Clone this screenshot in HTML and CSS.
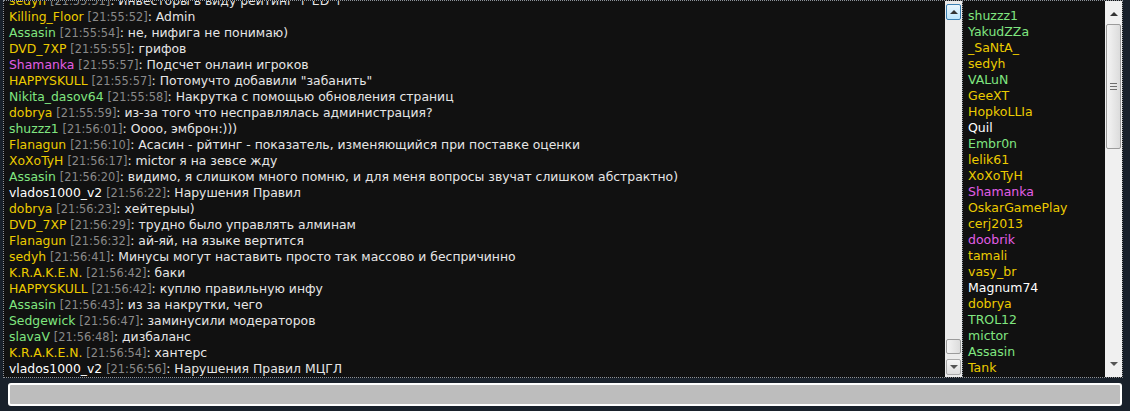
FILE: index.html
```html
<!DOCTYPE html>
<html>
	<head>
		<title>Чат</title>
		<meta http-equiv="Content-Type" content="text/html; charset=utf-8" />
		<link rel="stylesheet" href="styles.css">
	</head>
	<body>
		<div class="chat">
			<div class="messages">
				<div class="msg"><span class="nick yellow">sedyh</span> <span class="time">[21:55:51]</span>: Инвесторы в виду рейтинг + ED +</div>
				<div class="msg"><span class="nick yellow">Killing_Floor</span> <span class="time">[21:55:52]</span>: Admin</div>
				<div class="msg"><span class="nick green">Assasin</span> <span class="time">[21:55:54]</span>: не, нифига не понимаю)</div>
				<div class="msg"><span class="nick yellow">DVD_7XP</span> <span class="time">[21:55:55]</span>: грифов</div>
				<div class="msg"><span class="nick pink">Shamanka</span> <span class="time">[21:55:57]</span>: Подсчет онлаин игроков</div>
				<div class="msg"><span class="nick yellow">HAPPYSKULL</span> <span class="time">[21:55:57]</span>: Потомучто добавили "забанить"</div>
				<div class="msg"><span class="nick green">Nikita_dasov64</span> <span class="time">[21:55:58]</span>: Накрутка с помощью обновления страниц</div>
				<div class="msg"><span class="nick yellow">dobrya</span> <span class="time">[21:55:59]</span>: из-за того что несправлялась администрация?</div>
				<div class="msg"><span class="nick green">shuzzz1</span> <span class="time">[21:56:01]</span>: Оооо, эмброн:)))</div>
				<div class="msg"><span class="nick yellow">Flanagun</span> <span class="time">[21:56:10]</span>: Асасин - рйтинг - показатель, изменяющийся при поставке оценки</div>
				<div class="msg"><span class="nick yellow">XoXoTyH</span> <span class="time">[21:56:17]</span>: mictor я на зевсе жду</div>
				<div class="msg"><span class="nick green">Assasin</span> <span class="time">[21:56:20]</span>: видимо, я слишком много помню, и для меня вопросы звучат слишком абстрактно)</div>
				<div class="msg"><span class="nick white">vlados1000_v2</span> <span class="time">[21:56:22]</span>: Нарушения Правил</div>
				<div class="msg"><span class="nick yellow">dobrya</span> <span class="time">[21:56:23]</span>: хейтерыы)</div>
				<div class="msg"><span class="nick yellow">DVD_7XP</span> <span class="time">[21:56:29]</span>: трудно было управлять алминам</div>
				<div class="msg"><span class="nick yellow">Flanagun</span> <span class="time">[21:56:32]</span>: ай-яй, на языке вертится</div>
				<div class="msg"><span class="nick yellow">sedyh</span> <span class="time">[21:56:41]</span>: Минусы могут наставить просто так массово и беспричинно</div>
				<div class="msg"><span class="nick yellow">K.R.A.K.E.N.</span> <span class="time">[21:56:42]</span>: баки</div>
				<div class="msg"><span class="nick yellow">HAPPYSKULL</span> <span class="time">[21:56:42]</span>: куплю правильную инфу</div>
				<div class="msg"><span class="nick green">Assasin</span> <span class="time">[21:56:43]</span>: из за накрутки, чего</div>
				<div class="msg"><span class="nick green">Sedgewick</span> <span class="time">[21:56:47]</span>: заминусили модераторов</div>
				<div class="msg"><span class="nick green">slavaV</span> <span class="time">[21:56:48]</span>: дизбаланс</div>
				<div class="msg"><span class="nick yellow">K.R.A.K.E.N.</span> <span class="time">[21:56:54]</span>: хантерс</div>
				<div class="msg"><span class="nick white">vlados1000_v2</span> <span class="time">[21:56:56]</span>: Нарушения Правил МЦГЛ</div>
			</div>
			<div class="scrollbar">
				<div class="sbtn hover"><span class="arrow up"></span></div>
				<div class="track chat-track">
					<div class="thumb small"></div>
				</div>
				<div class="sbtn"><span class="arrow down"></span></div>
			</div>
			<div class="users">
				<div class="user green">shuzzz1</div>
				<div class="user green">YakudZZa</div>
				<div class="user yellow">_SaNtA_</div>
				<div class="user yellow">sedyh</div>
				<div class="user green">VALuN</div>
				<div class="user yellow">GeeXT</div>
				<div class="user yellow">HopkoLLIa</div>
				<div class="user white">Quil</div>
				<div class="user green">Embr0n</div>
				<div class="user yellow">lelik61</div>
				<div class="user yellow">XoXoTyH</div>
				<div class="user pink">Shamanka</div>
				<div class="user yellow">OskarGamePlay</div>
				<div class="user yellow">cerj2013</div>
				<div class="user pink">doobrik</div>
				<div class="user yellow">tamali</div>
				<div class="user yellow">vasy_br</div>
				<div class="user white">Magnum74</div>
				<div class="user yellow">dobrya</div>
				<div class="user green">TROL12</div>
				<div class="user green">mictor</div>
				<div class="user green">Assasin</div>
				<div class="user yellow">Tank</div>
			</div>
			<div class="scrollbar plain">
				<div class="sbtn flat"><span class="arrow up"></span></div>
				<div class="track">
					<div class="thumb big"><span class="grip"></span></div>
				</div>
				<div class="sbtn flat"><span class="arrow down"></span></div>
			</div>
		</div>
		<div class="input-row">
			<input class="say" type="text">
		</div>
	</body>
</html>
```

FILE: styles.css
```css
body {
	margin: 0px;
	padding: 0px;
	background: #19212b;
	font-family: "DejaVu Sans", Verdana, sans-serif;
	font-size: 12.4px;
	overflow: hidden;
}
.chat {
	display: flex;
	margin-left: 3px;
	width: 1118px;
	height: 376px;
	border: 1px dotted #8c929a;
	background: #111111;
}
.messages {
	flex: 1;
	display: flex;
	flex-direction: column;
	justify-content: flex-end;
	overflow: hidden;
	padding-left: 5px;
	color: #e6e6e6;
}
.msg {
	line-height: 16px;
	height: 16px;
	white-space: nowrap;
	flex-shrink: 0;
}
.time {
	color: #8a8a8a;
	font-size: 11.4px;
}
.yellow { color: #eccb00; }
.green { color: #80e680; }
.pink { color: #e25ee6; }
.white { color: #ffffff; }

.scrollbar {
	width: 17px;
	display: flex;
	flex-direction: column;
	background: #ebebeb;
	padding: 3px 0px 2px 0px;
}
.scrollbar.plain {
	background: #f0f0f0;
	padding: 5px 0px 5px 0px;
}
.track {
	flex: 1;
	position: relative;
}
.sbtn {
	height: 14px;
	margin: 0px 1px;
	border: 1px solid #a9a9a9;
	border-radius: 2px;
	background: linear-gradient(#f6f6f6, #dedede);
	display: flex;
	align-items: center;
	justify-content: center;
}
.sbtn.hover {
	border-color: #3c7fb1;
	background: linear-gradient(#eaf6fd, #bee6fd);
}
.sbtn.flat {
	border-color: transparent;
	background: none;
}
.arrow {
	width: 0px;
	height: 0px;
	border-left: 4px solid transparent;
	border-right: 4px solid transparent;
}
.arrow.up { border-bottom: 4px solid #333; }
.arrow.down { border-top: 4px solid #555; }

.thumb {
	position: absolute;
	left: 1px;
	right: 1px;
	border: 1px solid #9b9b9b;
	border-radius: 2px;
	background: linear-gradient(to right, #f4f4f4, #dcdcdc);
}
.thumb.small {
	bottom: 5px;
	height: 13px;
}
.thumb.big {
	top: 2px;
	height: 123px;
	display: flex;
	align-items: center;
	justify-content: center;
}
.grip {
	width: 7px;
	height: 7px;
	background: repeating-linear-gradient(#6e6e6e 0px, #6e6e6e 1px, transparent 1px, transparent 3px);
}
.users {
	width: 137px;
	border-left: 1px dotted #8c929a;
	padding: 7px 0px 0px 5px;
	overflow: hidden;
}
.user {
	line-height: 16px;
	height: 16px;
	font-size: 12.5px;
	white-space: nowrap;
}
.input-row {
	padding: 5px 8px 0px 8px;
}
.say {
	display: block;
	box-sizing: border-box;
	width: 1114px;
	height: 23px;
	border: 2px solid #ffffff;
	border-radius: 3px;
	background: #bdbdbd;
	outline: none;
	margin: 0px;
}
```
